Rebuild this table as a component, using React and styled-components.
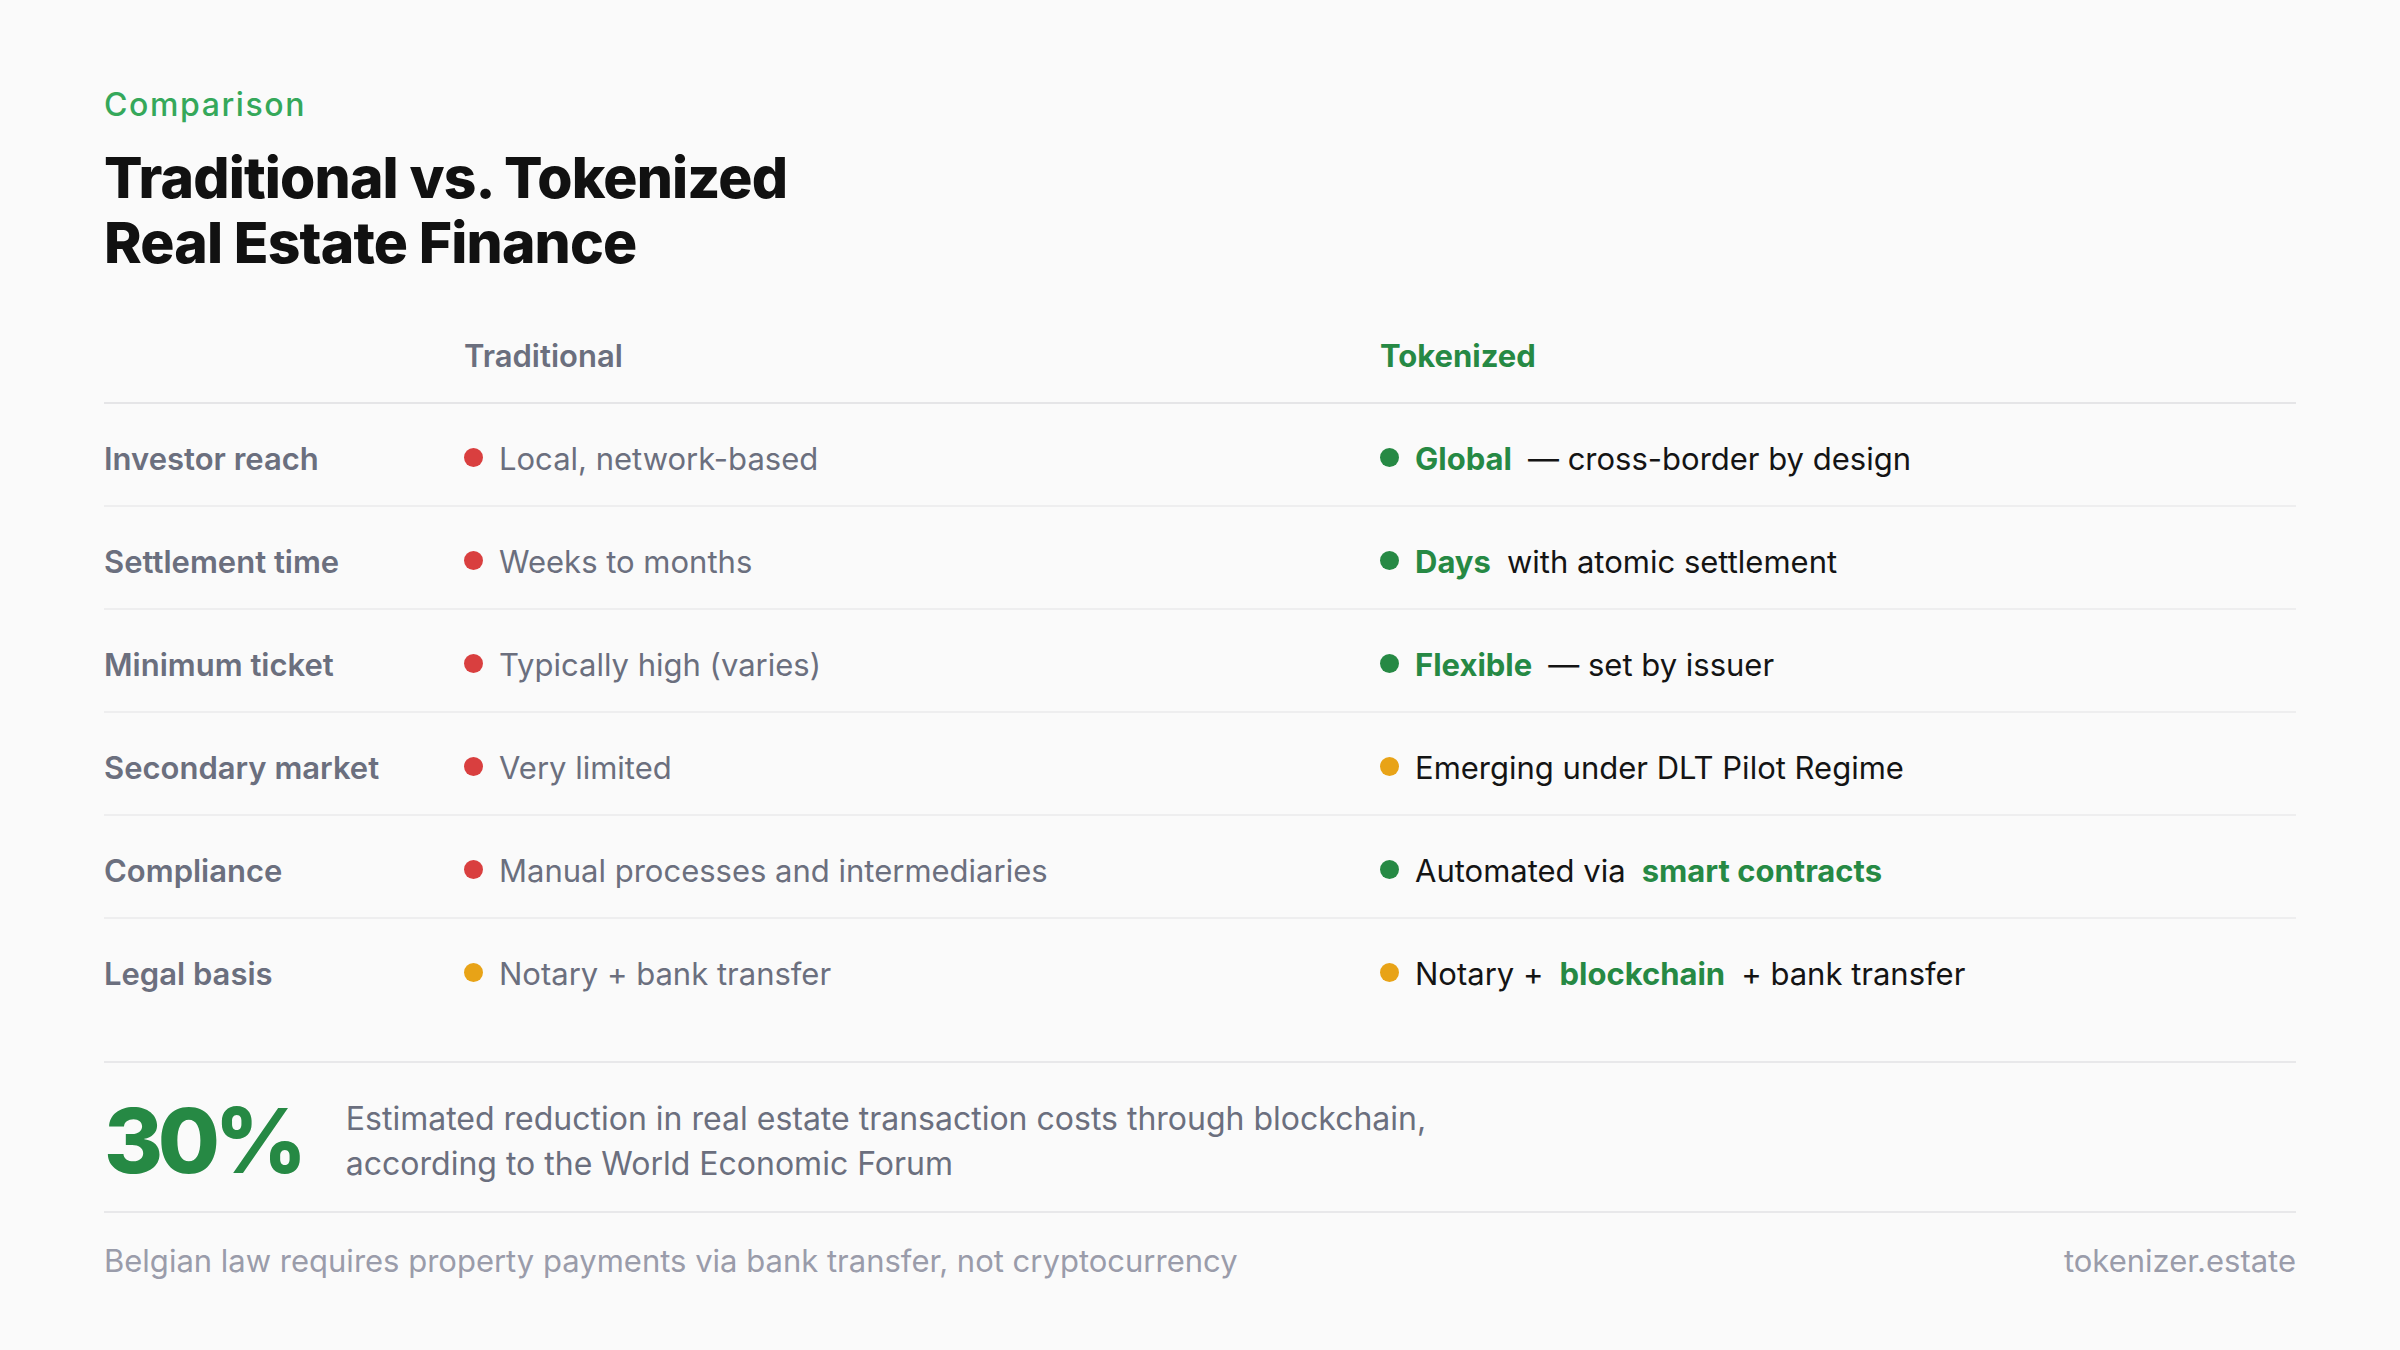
import React from "react";
import styled, { createGlobalStyle } from "styled-components";

const GlobalStyle = createGlobalStyle`
  html, body { margin: 0; padding: 0; background: #fafafa; }
  body { font-family: Inter, "Liberation Sans", sans-serif; }
  * { box-sizing: border-box; }
`;

const GREEN = "#268944";
const GRAY = "#6b6f7e";

const Page = styled.div`
  width: 2400px;
  height: 1350px;
  padding: 87px 104px 0;
  background: #fafafa;
  display: flex;
  flex-direction: column;
`;

const Eyebrow = styled.div`
  font-size: 32px;
  line-height: 36px;
  font-weight: 500;
  letter-spacing: 0.05em;
  color: #35a85a;
`;

const Title = styled.h1`
  margin: 22px 0 0;
  font-size: 57px;
  line-height: 65px;
  font-weight: 800;
  letter-spacing: -0.015em;
  color: #111111;
`;

const Table = styled.div`
  margin-top: 33px;
  display: flex;
  flex-direction: column;
`;

const GridRow = styled.div`
  display: grid;
  grid-template-columns: 360px 1fr 1fr;
  align-items: center;
`;

const HeaderRow = styled(GridRow)`
  padding: 29px 0 27px;
  border-bottom: 2px solid #e5e5e7;
`;

const HeadCell = styled.div`
  font-size: 31px;
  line-height: 38px;
  font-weight: ${(p) => (p.$accent ? 700 : 600)};
  color: ${(p) => (p.$accent ? GREEN : GRAY)};
`;

const Row = styled(GridRow)`
  padding: 36px 0 27px;
  border-bottom: ${(p) => (p.$last ? "none" : "2px solid #eeeeef")};
`;

const Label = styled.div`
  font-size: 31px;
  line-height: 38px;
  font-weight: 600;
  color: ${GRAY};
`;

const Cell = styled.div`
  display: flex;
  align-items: center;
  gap: 16px;
  font-size: 31px;
  line-height: 38px;
  font-weight: 400;
  color: ${(p) => (p.$dark ? "#141414" : GRAY)};
  white-space: nowrap;
`;

const Dot = styled.span`
  flex: none;
  width: 19px;
  height: 19px;
  border-radius: 50%;
  margin-top: -3px;
  background: ${(p) =>
    p.$tone === "red" ? "#d93f3f" : p.$tone === "amber" ? "#e8a317" : GREEN};
`;

const Em = styled.span`
  color: ${GREEN};
  font-weight: 700;
`;

const Stat = styled.div`
  margin-top: 41px;
  padding: 28px 0 20px;
  border-top: 2px solid #e8e8ea;
  border-bottom: 2px solid #e8e8ea;
  display: flex;
  align-items: center;
  gap: 44px;
`;

const StatValue = styled.div`
  font-size: 90px;
  line-height: 100px;
  font-weight: 800;
  letter-spacing: -0.06em;
  color: ${GREEN};
`;

const StatText = styled.div`
  font-size: 32px;
  line-height: 45px;
  color: ${GRAY};
`;

const Footer = styled.div`
  padding-top: 30px;
  display: flex;
  justify-content: space-between;
  align-items: center;
  font-size: 31px;
  line-height: 36px;
  color: #9a9caa;
`;

const rows = [
  {
    label: "Investor reach",
    trad: { tone: "red", text: "Local, network-based" },
    tok: { tone: "green", parts: [["em", "Global"], ["t", "— cross-border by design"]] },
  },
  {
    label: "Settlement time",
    trad: { tone: "red", text: "Weeks to months" },
    tok: { tone: "green", parts: [["em", "Days"], ["t", "with atomic settlement"]] },
  },
  {
    label: "Minimum ticket",
    trad: { tone: "red", text: "Typically high (varies)" },
    tok: { tone: "green", parts: [["em", "Flexible"], ["t", "— set by issuer"]] },
  },
  {
    label: "Secondary market",
    trad: { tone: "red", text: "Very limited" },
    tok: { tone: "amber", parts: [["t", "Emerging under DLT Pilot Regime"]] },
  },
  {
    label: "Compliance",
    trad: { tone: "red", text: "Manual processes and intermediaries" },
    tok: { tone: "green", parts: [["t", "Automated via"], ["em", "smart contracts"]] },
  },
  {
    label: "Legal basis",
    trad: { tone: "amber", text: "Notary + bank transfer" },
    tok: {
      tone: "amber",
      parts: [["t", "Notary +"], ["em", "blockchain"], ["t", "+ bank transfer"]],
    },
  },
];

export default function App() {
  return (
    <>
      <GlobalStyle />
      <Page>
        <Eyebrow>Comparison</Eyebrow>
        <Title>
          Traditional vs. Tokenized
          <br />
          Real Estate Finance
        </Title>
        <Table>
          <HeaderRow>
            <HeadCell />
            <HeadCell>Traditional</HeadCell>
            <HeadCell $accent>Tokenized</HeadCell>
          </HeaderRow>
          {rows.map((r, i) => (
            <Row key={r.label} $last={i === rows.length - 1}>
              <Label>{r.label}</Label>
              <Cell>
                <Dot $tone={r.trad.tone} />
                <span>{r.trad.text}</span>
              </Cell>
              <Cell $dark>
                <Dot $tone={r.tok.tone} />
                {r.tok.parts.map(([k, t], j) =>
                  k === "em" ? <Em key={j}>{t}</Em> : <span key={j}>{t}</span>
                )}
              </Cell>
            </Row>
          ))}
        </Table>
        <Stat>
          <StatValue>30%</StatValue>
          <StatText>
            Estimated reduction in real estate transaction costs through blockchain,
            <br />
            according to the World Economic Forum
          </StatText>
        </Stat>
        <Footer>
          <span>Belgian law requires property payments via bank transfer, not cryptocurrency</span>
          <span>tokenizer.estate</span>
        </Footer>
      </Page>
    </>
  );
}
